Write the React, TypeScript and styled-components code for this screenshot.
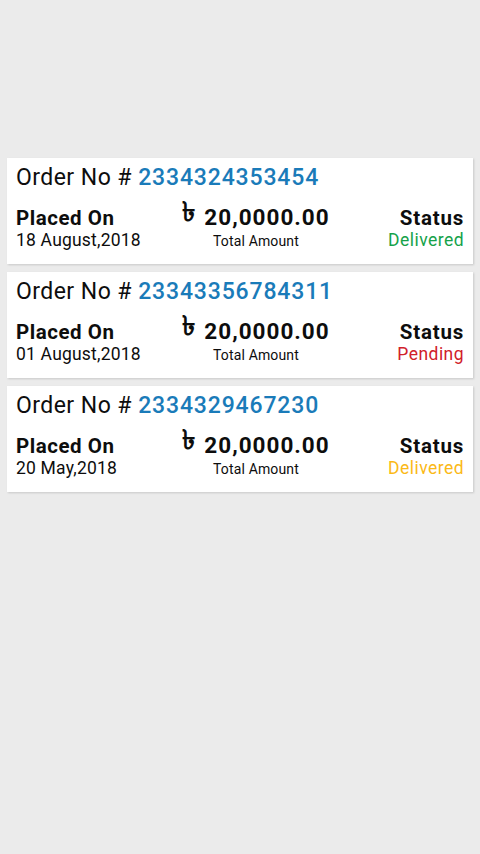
import React from "react";
import styled, { createGlobalStyle } from "styled-components";

const Global = createGlobalStyle`
  html, body { margin: 0; padding: 0; background: #ebebeb; }
  body { font-family: Roboto, "Noto Sans", sans-serif; }
`;

const Page = styled.div`
  min-height: 854px;
  background: #ebebeb;
  padding: 158px 7px 0 7px;
  box-sizing: border-box;
  display: flex;
  flex-direction: column;
  gap: 8px;
`;

const Card = styled.div`
  background: #fff;
  height: 106px;
  box-sizing: border-box;
  padding: 6px 9px 0 9px;
  box-shadow: 1px 1px 2px rgba(0, 0, 0, 0.15);
  display: flex;
  flex-direction: column;
`;

const Title = styled.div`
  font-size: 23px;
  color: #0d0d0d;
  line-height: 28px;
  white-space: nowrap;
  letter-spacing: 0.45px;
`;

const OrderNo = styled.span`
  color: #1a7bb9;
  font-weight: 500;
  letter-spacing: 0.85px;
`;

const Row = styled.div`
  display: grid;
  grid-template-columns: 150px 180px 1fr;
  align-items: start;
  margin-top: 14px;
`;

const Col = styled.div<{ $align: "left" | "center" | "right" }>`
  display: flex;
  flex-direction: column;
  align-items: ${(p) =>
    p.$align === "left" ? "flex-start" : p.$align === "right" ? "flex-end" : "center"};
`;

const Label = styled.div<{ $spacing?: number }>`
  font-size: 20.5px;
  font-weight: 700;
  color: #0d0d0d;
  line-height: 24px;
  letter-spacing: ${(p) => p.$spacing ?? 0.55}px;
  white-space: nowrap;
`;

const Sub = styled.div<{ $color?: string; $spacing?: number }>`
  font-size: 17.5px;
  color: ${(p) => p.$color || "#0d0d0d"};
  line-height: 20px;
  letter-spacing: ${(p) => p.$spacing ?? 0.2}px;
  white-space: nowrap;
`;

const Amount = styled.div`
  display: flex;
  align-items: flex-start;
  gap: 9px;
  font-size: 22.5px;
  font-weight: 700;
  color: #0d0d0d;
  line-height: 26px;
  letter-spacing: 1px;
  margin-top: -2px;
`;

const Taka = styled.span`
  font-family: "Noto Sans", "DejaVu Sans", sans-serif;
  font-weight: 700;
  font-size: 27px;
  line-height: 20px;
  letter-spacing: 0;
  margin-top: -3px;
`;

const Small = styled.div`
  font-size: 14px;
  color: #0d0d0d;
  line-height: 16px;
  letter-spacing: 0.15px;
  margin-top: 3px;
`;

const orders = [
  { no: "2334324353454", date: "18 August,2018", status: "Delivered", color: "#15a24a" },
  { no: "23343356784311", date: "01 August,2018", status: "Pending", color: "#d0202a" },
  { no: "2334329467230", date: "20 May,2018", status: "Delivered", color: "#fbb917" },
];

export default function App() {
  return (
    <>
      <Global />
      <Page>
        {orders.map((o) => (
          <Card key={o.no}>
            <Title>
              Order No # <OrderNo>{o.no}</OrderNo>
            </Title>
            <Row>
              <Col $align="left">
                <Label>Placed On</Label>
                <Sub>{o.date}</Sub>
              </Col>
              <Col $align="center">
                <Amount>
                  <Taka>৳</Taka>
                  <span>20,0000.00</span>
                </Amount>
                <Small>Total Amount</Small>
              </Col>
              <Col $align="right">
                <Label $spacing={0.8}>Status</Label>
                <Sub $color={o.color} $spacing={0.45}>
                  {o.status}
                </Sub>
              </Col>
            </Row>
          </Card>
        ))}
      </Page>
    </>
  );
}
